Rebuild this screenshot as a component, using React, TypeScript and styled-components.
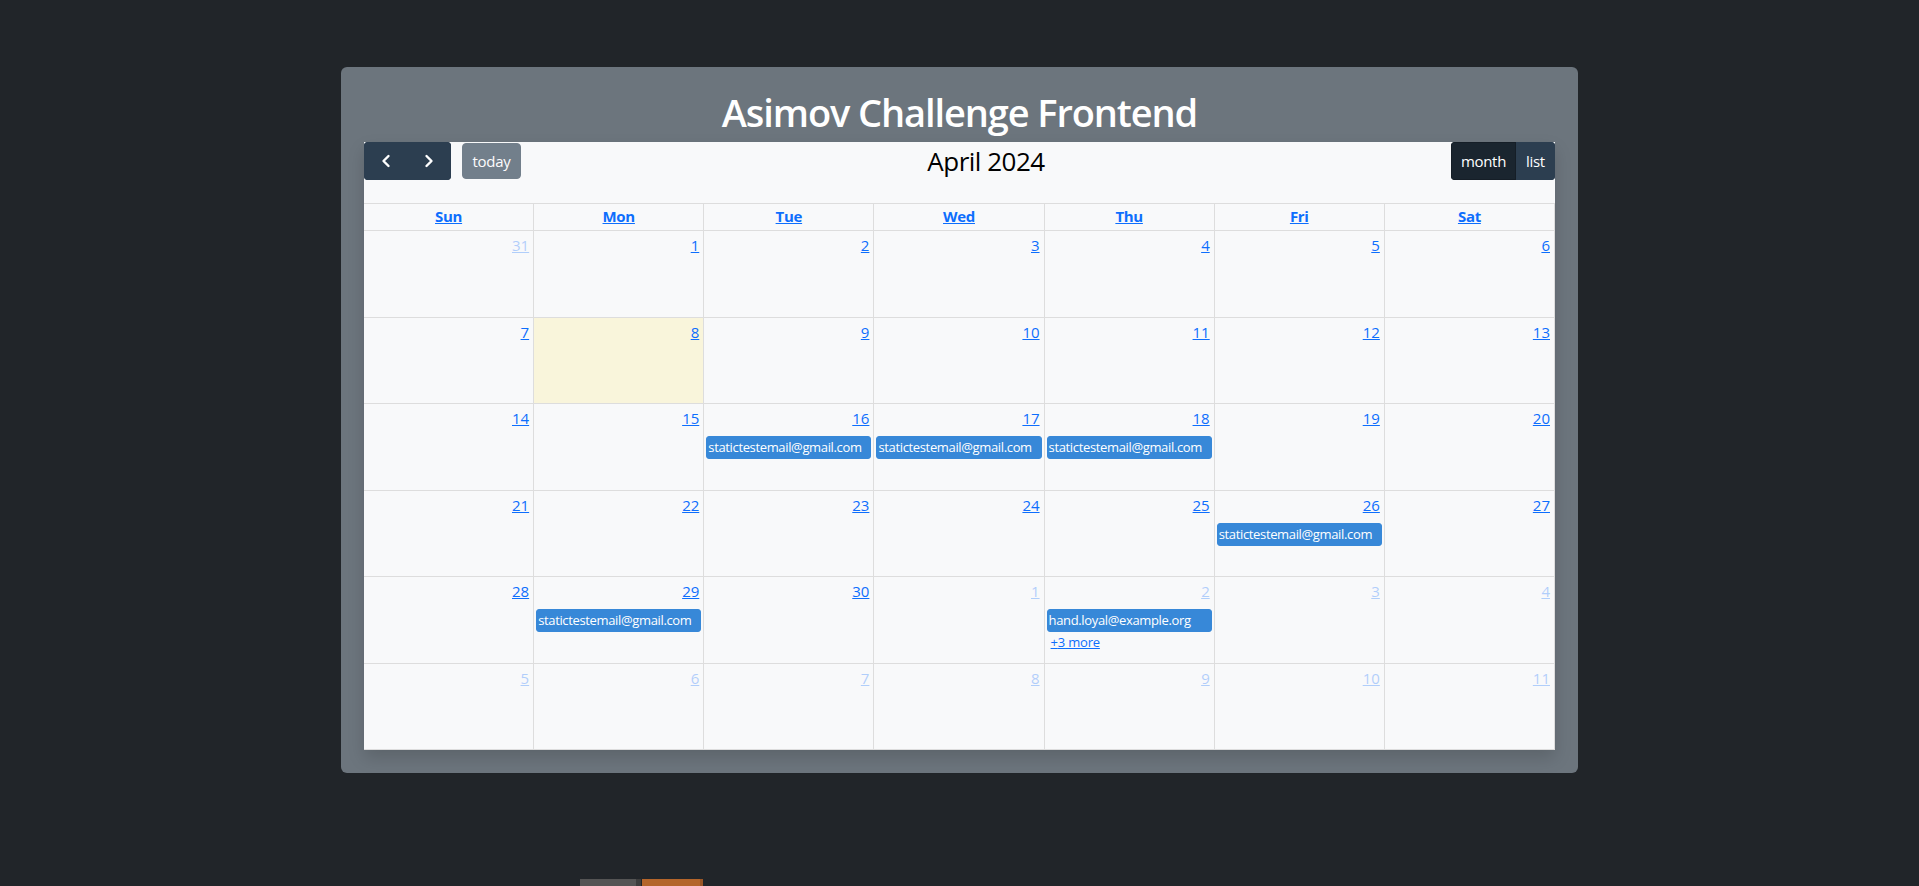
import React from "react";
import styled, { createGlobalStyle, css } from "styled-components";

const GlobalStyle = createGlobalStyle`
  html, body {
    margin: 0;
    padding: 0;
    overflow: hidden;
    background: #212529;
  }
  body {
    font-family: "Open Sans", "Noto Sans", sans-serif;
    font-size: 16px;
    line-height: 1.5;
    color: #212529;
  }
  * { box-sizing: border-box; }
`;

const Page = styled.div`
  display: flex;
  flex-direction: column;
  align-items: center;
  padding-top: 67px;
  width: 1919px;
  height: 886px;
`;

const Card = styled.section`
  width: 1237px;
  background: #6c757d;
  border-radius: 6px;
  padding: 21px 23px 23px;
`;

const Title = styled.h1`
  margin: 0 0 6px;
  font-size: 38px;
  line-height: 48px;
  font-weight: 600;
  color: #ffffff;
  text-align: center;
  letter-spacing: -1.1px;
`;

const CalendarBox = styled.div`
  background: #f8f9fa;
  box-shadow: 0 8px 16px rgba(0, 0, 0, 0.15);
`;

const Toolbar = styled.div`
  display: flex;
  justify-content: space-between;
  align-items: center;
  height: 38px;
  margin-bottom: 23px;
`;

const Chunk = styled.div`
  display: flex;
  align-items: center;
  gap: 11px;
`;

const ButtonGroup = styled.div`
  display: flex;
  border-radius: 4px;
  overflow: hidden;
`;

const ToolButton = styled.button<{ $active?: boolean; $disabled?: boolean; $w: number }>`
  display: flex;
  align-items: center;
  justify-content: center;
  width: ${(p) => p.$w}px;
  height: 38px;
  padding: 0;
  border: 1px solid #2c3e50;
  background: #2c3e50;
  color: #ffffff;
  font-family: "Open Sans", sans-serif;
  font-size: 15px;
  letter-spacing: -0.3px;
  line-height: 1;
  cursor: pointer;
  ${(p) =>
    p.$active &&
    css`
      background: #1a252f;
      border-color: #151e27;
    `}
  ${(p) =>
    p.$disabled &&
    css`
      opacity: 0.65;
      border-radius: 4px;
      height: 36px;
    `}
`;

const MonthTitle = styled.h2`
  margin: 0;
  font-size: 26px;
  font-weight: 500;
  line-height: 38px;
  color: #000000;
  letter-spacing: -0.5px;
`;

const Grid = styled.div`
  border-top: 1px solid #dddddd;
`;

const Row = styled.div<{ $h: number }>`
  display: grid;
  grid-template-columns: repeat(7, 1fr);
  height: ${(p) => p.$h}px;
`;

const HeadCell = styled.div`
  display: flex;
  align-items: center;
  justify-content: center;
  border-right: 1px solid #dddddd;
  border-bottom: 1px solid #dddddd;
  padding: 0 4px 2px;
`;

const HeadLink = styled.a`
  color: #0d6efd;
  font-weight: 700;
  font-size: 15px;
  letter-spacing: -0.3px;
  text-decoration: underline;
`;

const DayCell = styled.div<{ $today?: boolean }>`
  display: flex;
  flex-direction: column;
  min-width: 0;
  border-right: 1px solid #dddddd;
  border-bottom: 1px solid #dddddd;
  background: ${(p) => (p.$today ? "#f9f5db" : "transparent")};
`;

const DayTop = styled.div`
  display: flex;
  justify-content: flex-end;
`;

const DayNumber = styled.a<{ $other?: boolean }>`
  padding: 2px 4px 6px;
  color: #0d6efd;
  font-size: 15px;
  line-height: 24px;
  text-decoration: underline;
  opacity: ${(p) => (p.$other ? 0.3 : 1)};
`;

const Event = styled.div`
  margin: 0 2px 0 2px;
  border: 1px solid #3788d8;
  border-radius: 3px;
  background: #3788d8;
  color: #ffffff;
  font-size: 13px;
  letter-spacing: -0.35px;
  line-height: 19px;
  padding: 1px;
  white-space: nowrap;
  overflow: hidden;
`;

const MoreLink = styled.a`
  margin: 0 0 0 6px;
  color: #0d6efd;
  font-size: 13px;
  letter-spacing: -0.2px;
  line-height: 20px;
  text-decoration: underline;
  align-self: flex-start;
`;

const Strip = styled.div`
  display: flex;
  width: 1237px;
  margin-top: 106px;
  padding-left: 239px;
`;

const StripBlock = styled.div<{ $w: number; $c: string }>`
  width: ${(p) => p.$w}px;
  height: 20px;
  background: ${(p) => p.$c};
`;

const Chevron = ({ dir }: { dir: "left" | "right" }) => (
  <svg width="12" height="14" viewBox="0 0 12 14" fill="none">
    <path
      d={dir === "left" ? "M8.5 2 L3.5 7 L8.5 12" : "M3.5 2 L8.5 7 L3.5 12"}
      stroke="#ffffff"
      strokeWidth="2.4"
      strokeLinecap="round"
      strokeLinejoin="round"
    />
  </svg>
);

type Day = {
  n: number;
  other?: boolean;
  today?: boolean;
  events?: string[];
  more?: number;
};

const E = "statictestemail@gmail.com";

const weeks: Day[][] = [
  [{ n: 31, other: true }, { n: 1 }, { n: 2 }, { n: 3 }, { n: 4 }, { n: 5 }, { n: 6 }],
  [{ n: 7 }, { n: 8, today: true }, { n: 9 }, { n: 10 }, { n: 11 }, { n: 12 }, { n: 13 }],
  [
    { n: 14 },
    { n: 15 },
    { n: 16, events: [E] },
    { n: 17, events: [E] },
    { n: 18, events: [E] },
    { n: 19 },
    { n: 20 },
  ],
  [{ n: 21 }, { n: 22 }, { n: 23 }, { n: 24 }, { n: 25 }, { n: 26, events: [E] }, { n: 27 }],
  [
    { n: 28 },
    { n: 29, events: [E] },
    { n: 30 },
    { n: 1, other: true },
    { n: 2, other: true, events: ["hand.loyal@example.org"], more: 3 },
    { n: 3, other: true },
    { n: 4, other: true },
  ],
  [
    { n: 5, other: true },
    { n: 6, other: true },
    { n: 7, other: true },
    { n: 8, other: true },
    { n: 9, other: true },
    { n: 10, other: true },
    { n: 11, other: true },
  ],
];

const dayNames = ["Sun", "Mon", "Tue", "Wed", "Thu", "Fri", "Sat"];
const rowHeights = [87, 86, 87, 86, 87, 86];

export default function App() {
  return (
    <>
      <GlobalStyle />
      <Page>
        <Card>
          <Title>Asimov Challenge Frontend</Title>
          <CalendarBox>
            <Toolbar>
              <Chunk>
                <ButtonGroup>
                  <ToolButton $w={43} aria-label="prev">
                    <Chevron dir="left" />
                  </ToolButton>
                  <ToolButton $w={44} aria-label="next">
                    <Chevron dir="right" />
                  </ToolButton>
                </ButtonGroup>
                <ToolButton $w={59} $disabled>
                  today
                </ToolButton>
              </Chunk>
              <MonthTitle>April 2024</MonthTitle>
              <Chunk>
                <ButtonGroup>
                  <ToolButton $w={65} $active>
                    month
                  </ToolButton>
                  <ToolButton $w={39}>list</ToolButton>
                </ButtonGroup>
              </Chunk>
            </Toolbar>
            <Grid>
              <Row $h={27}>
                {dayNames.map((d) => (
                  <HeadCell key={d}>
                    <HeadLink>{d}</HeadLink>
                  </HeadCell>
                ))}
              </Row>
              {weeks.map((week, wi) => (
                <Row key={wi} $h={rowHeights[wi]}>
                  {week.map((day, di) => (
                    <DayCell key={di} $today={day.today}>
                      <DayTop>
                        <DayNumber $other={day.other}>{day.n}</DayNumber>
                      </DayTop>
                      {day.events?.map((ev, ei) => (
                        <Event key={ei}>{ev}</Event>
                      ))}
                      {day.more ? <MoreLink>+{day.more} more</MoreLink> : null}
                    </DayCell>
                  ))}
                </Row>
              ))}
            </Grid>
          </CalendarBox>
        </Card>
        <Strip>
          <StripBlock $w={56} $c="#545454" />
          <StripBlock $w={5} $c="#3c3c3c" />
          <StripBlock $w={1} $c="#212529" />
          <StripBlock $w={58} $c="#b4652a" />
          <StripBlock $w={3} $c="#9a5626" />
        </Strip>
      </Page>
    </>
  );
}
